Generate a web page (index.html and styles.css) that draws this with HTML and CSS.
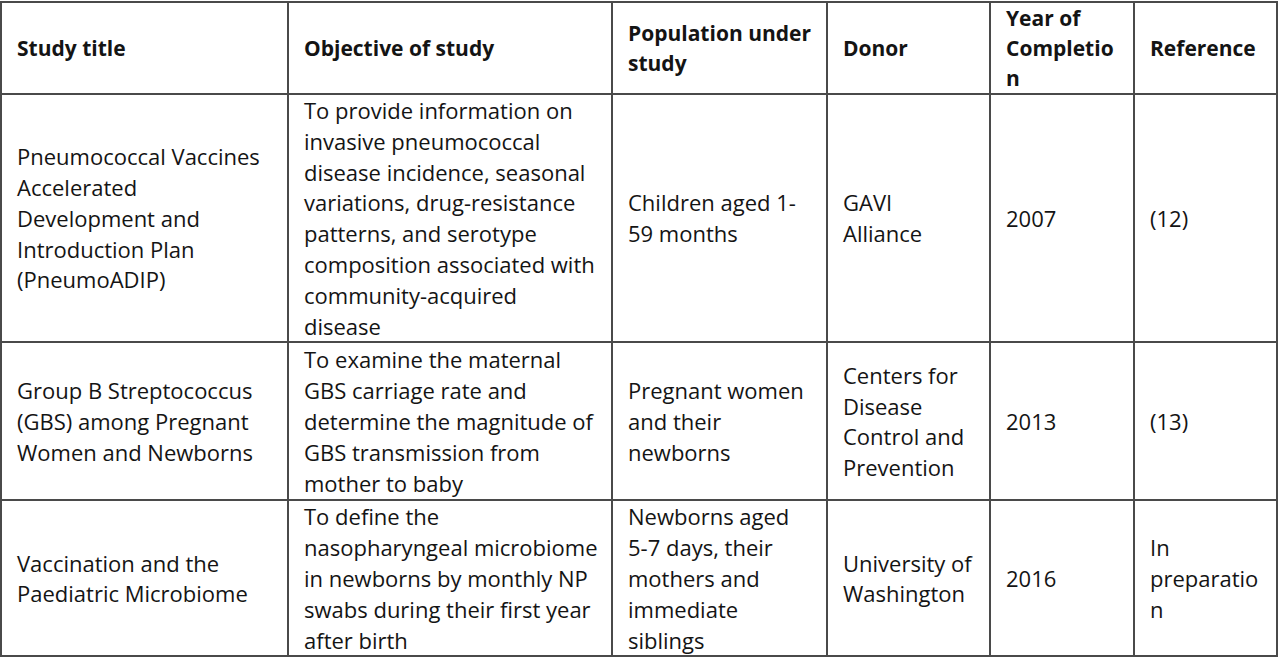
FILE: index.html
```html
<!DOCTYPE html>
<html>
<head>
<meta charset="utf-8">
<link rel="stylesheet" href="styles.css">
</head>
<body>
<table class="tbl">
  <colgroup>
    <col class="c1"><col class="c2"><col class="c3"><col class="c4"><col class="c5"><col class="c6">
  </colgroup>
  <tr class="r0">
    <th>Study title</th>
    <th>Objective of study</th>
    <th>Population under<br>study</th>
    <th>Donor</th>
    <th>Year of<br>Completio<br>n</th>
    <th>Reference</th>
  </tr>
  <tr class="r1">
    <td>Pneumococcal Vaccines<br>Accelerated<br>Development and<br>Introduction Plan<br>(PneumoADIP)</td>
    <td>To provide information on<br>invasive pneumococcal<br>disease incidence, seasonal<br>variations, drug-resistance<br>patterns, and serotype<br>composition associated with<br>community-acquired<br>disease</td>
    <td>Children aged 1-<br>59 months</td>
    <td>GAVI<br>Alliance</td>
    <td>2007</td>
    <td>(12)</td>
  </tr>
  <tr class="r2">
    <td>Group B Streptococcus<br>(GBS) among Pregnant<br>Women and Newborns</td>
    <td>To examine the maternal<br>GBS carriage rate and<br>determine the magnitude of<br>GBS transmission from<br>mother to baby</td>
    <td>Pregnant women<br>and their<br>newborns</td>
    <td>Centers for<br>Disease<br>Control and<br>Prevention</td>
    <td>2013</td>
    <td>(13)</td>
  </tr>
  <tr class="r3">
    <td>Vaccination and the<br>Paediatric Microbiome</td>
    <td>To define the<br>nasopharyngeal microbiome<br>in newborns by monthly NP<br>swabs during their first year<br>after birth</td>
    <td>Newborns aged<br>5-7 days, their<br>mothers and<br>immediate<br>siblings</td>
    <td>University of<br>Washington</td>
    <td>2016</td>
    <td>In<br>preparatio<br>n</td>
  </tr>
</table>
</body>
</html>
```
FILE: styles.css
```css
html, body {
  margin: 0;
  padding: 0;
  background: #ffffff;
}
body {
  padding: 1px 0 0 0;
}
.tbl {
  border-collapse: collapse;
  table-layout: fixed;
  width: 1277px;
  font-family: "Open Sans", "Liberation Sans", sans-serif;
  font-size: 22px;
  line-height: 30.8px;
  color: #141414;
}
.c1 { width: 287px; }
.c2 { width: 324px; }
.c3 { width: 215px; }
.c4 { width: 163px; }
.c5 { width: 144px; }
.c6 { width: 143px; }
.tbl th, .tbl td {
  border: 2px solid #4a4a4a;
  padding: 0 0 0 15px;
  vertical-align: middle;
  text-align: left;
  white-space: nowrap;
  overflow: hidden;
}
.tbl th {
  font-weight: 700;
  font-size: 21px;
  line-height: 30px;
}
.r0 { height: 92px; }
.r1 { height: 248px; }
.r2 { height: 158px; }
.r3 { height: 156px; }
```
